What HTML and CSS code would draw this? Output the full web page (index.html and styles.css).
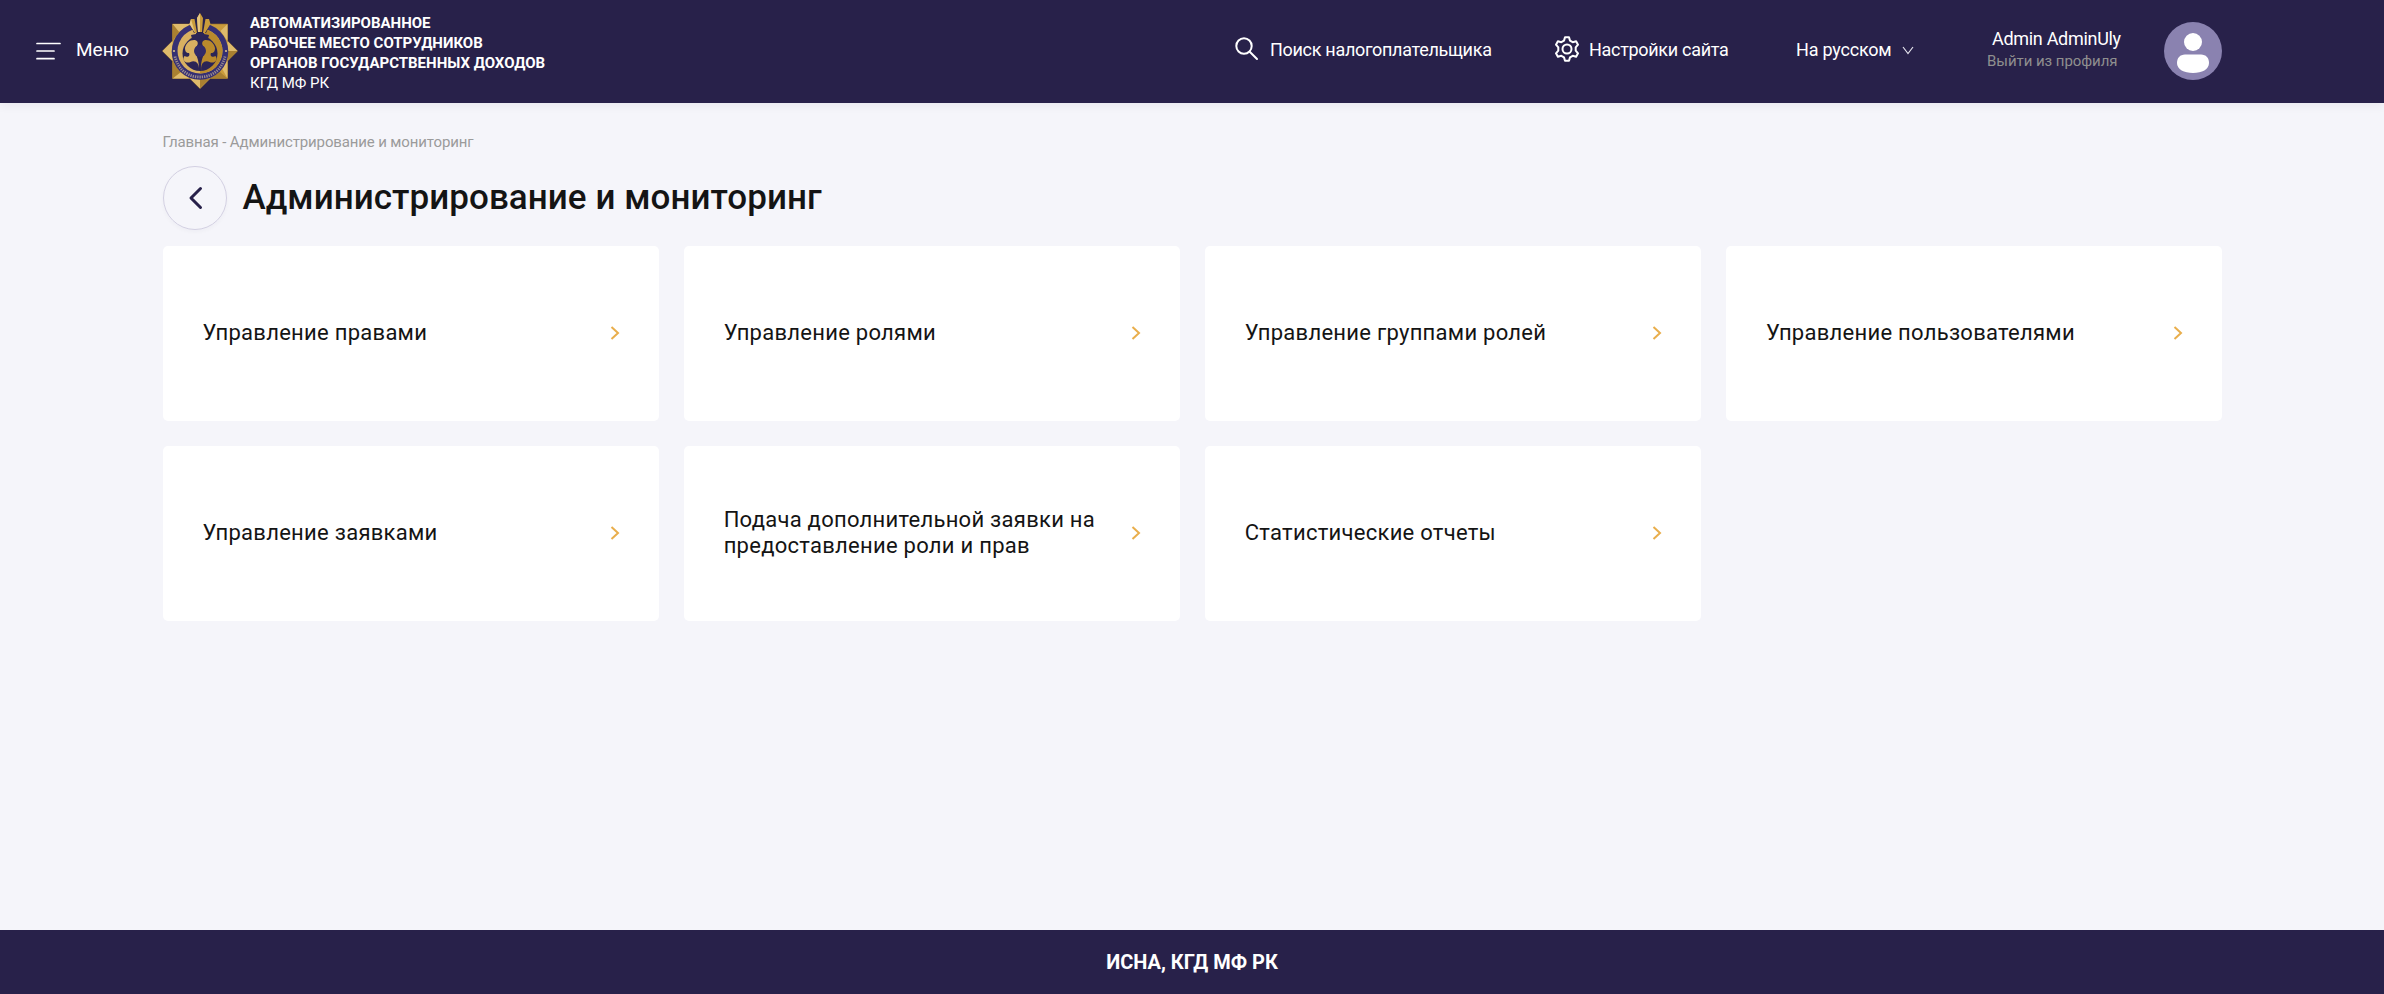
FILE: index.html
```html
<!DOCTYPE html>
<html lang="ru">
<head>
<meta charset="utf-8">
<title>Администрирование и мониторинг</title>
<link rel="stylesheet" href="styles.css">
</head>
<body>
<header class="header">
  <button class="menu">
    <svg class="menu-icon" width="25" height="18" viewBox="0 0 25 18" stroke="#fff" stroke-width="1.7" stroke-linecap="round"><path d="M1 1.5h23M1 9h17M1 16.7h17"/></svg>
    <span>Меню</span>
  </button>
  <a class="brand">
    <svg class="emblem" viewBox="0 0 76 76">
      <path fill="#c99b3b" stroke="#94712d" stroke-width=".6" d="M10.500 11h55v17L75.500 38 65.500 48v17.500H48L38 75.500 28 65.500H10.500V48L.5 38l10-10z"/>
      <path fill="#dfbb6c" d="M10.500 11h18L17 19zM10.500 28v20L.5 38zM65.500 28l-7-10 7-7zM65.500 65.500l-6-11 6-7zM28 65.500H10.500l8-6zM48 65.500H28l10 10zM75.500 38h-10V28z"/>
      <path fill="#a98031" d="M10.500 11L17 19l-6.500 9zM65.500 38h10l-10 10zM10.500 48l8 11-8 6.500zM48 65.500l10-6.500 7.500 6.500zM38 65.500v10l10-10z"/>
      <circle cx="38" cy="38.500" r="28.300" fill="#352f73"/>
      <circle cx="38" cy="38" r="22.500" fill="#d8b061"/>
      <path fill="#b98a2c" d="M38 15.500a22.500 22.500 0 0 1 0 45z"/>
      <circle cx="38" cy="40.500" r="17.500" fill="#2b2556"/>
      <path fill="#2b2556" d="M34 14h8v7l5 1-1 4-3 2h-10l-3-2-1-4 5-1z"/>
      <path fill="#d8b061" d="M36.500 60c2-11-4-13-8-11-5 2-9-2-6-6 3 2 6 0 4.500-3-3 0-4-2-4-5 1-5 5-8.500 10-8 3 1 4 4 1 7-4 5 5 10 2.500 26z"/>
      <path fill="#b98a2c" d="M39.500 60c-2-11 4-13 8-11 5 2 9-2 6-6-3 2-6 0-4.500-3 3 0 4-2 4-5-1-5-5-8.500-10-8-3 1-4 4-1 7 4 5-5 10-2.500 26z"/>
      <circle cx="38" cy="38" r="6" fill="#302a68"/>
      <path fill="#28214a" d="M32 2h12l6 5-6 13H32L26 7z"/>
      <path fill="#c99b3b" d="M38 0l-3 5 1 14h4l1-14zM29 6l-1.500 5 5.500 9h2L32.500 6zM47 6l1.500 5-5.500 9h-2l2.500-14z"/>
      <path fill="#e6c680" d="M38 0l-3 5 1 14h2zM29 6l-1.500 5 5.500 9z"/>
      <path fill="none" stroke="#9b8c8f" stroke-width="2.800" stroke-dasharray="1.300 1" d="M13 43.500C17 59 28 64 38 64S59 59 63 43.500"/>
      <circle cx="12" cy="38" r="1.100" fill="#d8bd89"/><circle cx="64" cy="38" r="1.100" fill="#d8bd89"/>
    </svg>
    <span class="brand-text"><b>АВТОМАТИЗИРОВАННОЕ<br>РАБОЧЕЕ МЕСТО СОТРУДНИКОВ<br>ОРГАНОВ ГОСУДАРСТВЕННЫХ ДОХОДОВ</b><br>КГД МФ РК</span>
  </a>
  <nav class="tools">
    <a class="tool search">
      <svg width="24" height="24" viewBox="0 0 24 24" fill="none" stroke="#fff" stroke-width="2" stroke-linecap="round"><circle cx="9" cy="9" r="7.700"/><path d="M14.700 14.700L22 22"/></svg>
      <span>Поиск налогоплательщика</span>
    </a>
    <a class="tool settings">
      <svg width="24" height="26" viewBox="0 0 24 26" fill="none" stroke="#fff" stroke-width="2" stroke-linejoin="round"><path d="M10 1.200h4l1 3.400 2.700 1.600 3.400-.9 1.900 3.400-2.300 2.700v3.200l2.300 2.700-1.900 3.400-3.400-.9-2.700 1.600-1 3.400h-4l-1-3.400-2.700-1.600-3.400.9L1 17.300l2.300-2.700v-3.200L1 8.700l1.900-3.400 3.400.9L9 4.600z"/><circle cx="12" cy="13" r="4.500"/></svg>
      <span>Настройки сайта</span>
    </a>
    <a class="tool lang">
      <span>На русском</span>
      <svg width="12" height="9" viewBox="0 0 12 9" fill="none" stroke="#e4e2ec" stroke-width="1.200"><path d="M1 1l5 6.500L11 1"/></svg>
    </a>
  </nav>
  <div class="user">
    <span class="user-name">Admin AdminUly</span>
    <a class="logout">Выйти из профиля</a>
  </div>
  <svg class="avatar" viewBox="0 0 58 58"><circle cx="29" cy="29" r="29" fill="#8a82b0"/><circle cx="29" cy="20" r="9" fill="#fff"/><path fill="#fff" d="M21 32.500h16c5 0 8 3.500 8 8.500 0 6.500-7 10-16 10s-16-3.500-16-10c0-5 3-8.500 8-8.500z"/></svg>
</header>
<main class="content">
  <div class="breadcrumbs">Главная - Администрирование и мониторинг</div>
  <div class="heading">
    <button class="back"><svg width="16" height="24" viewBox="0 0 16 24" fill="none" stroke="#28214a" stroke-width="3" stroke-linecap="round" stroke-linejoin="round"><path d="M13.500 2.500L4 12l9.500 9.500"/></svg></button>
    <h1 class="title">Администрирование и мониторинг</h1>
  </div>
  <div class="cards">
    <a class="card"><span>Управление правами</span><svg class="arrow" viewBox="0 0 10 14"><path d="M1.500 1L8 7l-6.500 6"/></svg></a>
    <a class="card"><span>Управление ролями</span><svg class="arrow" viewBox="0 0 10 14"><path d="M1.500 1L8 7l-6.500 6"/></svg></a>
    <a class="card"><span>Управление группами ролей</span><svg class="arrow" viewBox="0 0 10 14"><path d="M1.500 1L8 7l-6.500 6"/></svg></a>
    <a class="card"><span>Управление пользователями</span><svg class="arrow" viewBox="0 0 10 14"><path d="M1.500 1L8 7l-6.500 6"/></svg></a>
    <a class="card"><span>Управление заявками</span><svg class="arrow" viewBox="0 0 10 14"><path d="M1.500 1L8 7l-6.500 6"/></svg></a>
    <a class="card"><span>Подача дополнительной заявки на предоставление роли и прав</span><svg class="arrow" viewBox="0 0 10 14"><path d="M1.500 1L8 7l-6.500 6"/></svg></a>
    <a class="card"><span>Статистические отчеты</span><svg class="arrow" viewBox="0 0 10 14"><path d="M1.500 1L8 7l-6.500 6"/></svg></a>
  </div>
</main>
<footer class="footer">ИСНА, КГД МФ РК</footer>
</body>
</html>
```
FILE: styles.css
```css
* { box-sizing: border-box; }
body {
  margin: 0;
  height: 994px;
  display: flex;
  flex-direction: column;
  background: #f5f5fa;
  color: #141414;
  font-family: Roboto, "Liberation Sans", sans-serif;
}
button { padding: 0; border: 0; background: none; color: inherit; font: inherit; }
svg { display: block; flex: none; }
.header {
  flex: none;
  height: 103px;
  padding: 0 162px 0 36px;
  display: flex;
  align-items: flex-start;
  background: #28214a;
  color: #fff;
  box-shadow: 0 2px 10px rgba(40, 33, 74, .07);
  font-size: 18px;
  line-height: 22px;
}
.menu { width: 126px; margin-top: 39px; display: flex; gap: 15px; font-size: 19px; }
.menu-icon { margin-top: 3px; }
.brand { display: flex; gap: 12px; }
.emblem { width: 76px; height: 76px; margin-top: 13px; }
.brand-text { margin-top: 13px; font-size: 15px; line-height: 20px; white-space: nowrap; }
.tools { margin-left: auto; display: flex; margin-top: 39px; white-space: nowrap; letter-spacing: -.3px; }
.tool { display: flex; }
.search { width: 320px; gap: 11px; }
.search svg { margin-top: -2px; }
.settings { width: 241px; gap: 10px; }
.settings svg { margin-top: -3px; }
.lang { width: 191px; gap: 10px; letter-spacing: -.2px; }
.lang svg { margin-top: 7px; }
.user { width: 177px; margin-top: 28px; display: flex; flex-direction: column; white-space: nowrap; }
.user-name { padding-left: 5px; letter-spacing: -.3px; }
.logout { color: #8f8f8f; font-size: 15px; letter-spacing: -.05px; }
.avatar { width: 58px; height: 58px; margin-top: 22px; }
.content { flex: 1; padding: 30px 162px 0 162.5px; }
.breadcrumbs { height: 33px; color: #9b9b9b; font-size: 15px; line-height: 18px; letter-spacing: -.13px; }
.heading { height: 80px; display: flex; gap: 16px; }
.back {
  width: 64px;
  height: 64px;
  display: grid;
  place-items: center;
  border: 1px solid #d3d0e2;
  border-radius: 50%;
  box-shadow: 0 2px 4px rgba(40, 33, 74, .03);
}
.title { margin: 11px 0 0; font-size: 35px; line-height: 42px; font-weight: 500; letter-spacing: .05px; }
.cards { display: grid; grid-template-columns: repeat(4, 1fr); grid-auto-rows: 175px; gap: 25px; }
.card {
  padding: 0 39px 2px 40px;
  display: flex;
  align-items: center;
  justify-content: space-between;
  gap: 30px;
  border-radius: 5px;
  background: #fff;
  font-size: 22px;
  line-height: 26px;
  letter-spacing: .27px;
}
.arrow { width: 10px; height: 14px; margin-top: 1px; fill: none; stroke: #e9ae4c; stroke-width: 2; }
.footer {
  flex: none;
  height: 64px;
  background: #28214a;
  color: #fff;
  font-size: 20px;
  font-weight: 700;
  line-height: 65px;
  text-align: center;
}
```
